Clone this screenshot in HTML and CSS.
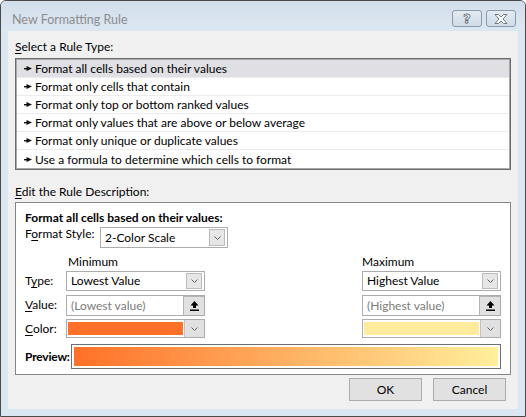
FILE: index.html
```html
<!DOCTYPE html>
<html lang="en">
<head>
    <meta charset="UTF-8">
    <title>New Formatting Rule</title>
    <link rel="stylesheet" href="styles.css">
</head>
<body>
    <div class="window">
        <div class="titlebar">
            <span class="title">New Formatting Rule</span>
            <div class="caption-buttons">
                <button class="cap-btn help">?</button>
                <button class="cap-btn close">
                    <svg width="14" height="10" viewBox="0 0 14 10">
                        <polygon points="1,0.5 4.5,0.5 7,3 9.5,0.5 13,0.5 9,5 13,9.5 9.5,9.5 7,7 4.5,9.5 1,9.5 5,5" fill="#fff" stroke="#6f7780" stroke-width="1" stroke-linejoin="round"/>
                    </svg>
                </button>
            </div>
        </div>

        <div class="client">
            <div class="label"><u>S</u>elect a Rule Type:</div>
            <ul class="rule-list">
                <li class="selected"><svg class="bullet" width="8" height="5" viewBox="0 0 8 5"><rect x="0" y="2" width="3" height="1.4"/><polygon points="2.5,0 8,2.6 2.5,5"/></svg>Format all cells based on their values</li>
                <li><svg class="bullet" width="8" height="5" viewBox="0 0 8 5"><rect x="0" y="2" width="3" height="1.4"/><polygon points="2.5,0 8,2.6 2.5,5"/></svg>Format only cells that contain</li>
                <li><svg class="bullet" width="8" height="5" viewBox="0 0 8 5"><rect x="0" y="2" width="3" height="1.4"/><polygon points="2.5,0 8,2.6 2.5,5"/></svg>Format only top or bottom ranked values</li>
                <li><svg class="bullet" width="8" height="5" viewBox="0 0 8 5"><rect x="0" y="2" width="3" height="1.4"/><polygon points="2.5,0 8,2.6 2.5,5"/></svg>Format only values that are above or below average</li>
                <li><svg class="bullet" width="8" height="5" viewBox="0 0 8 5"><rect x="0" y="2" width="3" height="1.4"/><polygon points="2.5,0 8,2.6 2.5,5"/></svg>Format only unique or duplicate values</li>
                <li><svg class="bullet" width="8" height="5" viewBox="0 0 8 5"><rect x="0" y="2" width="3" height="1.4"/><polygon points="2.5,0 8,2.6 2.5,5"/></svg>Use a formula to determine which cells to format</li>
            </ul>

            <div class="label section"><u>E</u>dit the Rule Description:</div>
            <div class="desc">
                <div class="desc-title">Format all cells based on their values:</div>
                <div class="style-row">
                    <span class="style-label">F<u>o</u>rmat Style:</span>
                    <div class="combo style-combo">
                        <span class="combo-text">2-Color Scale</span>
                        <span class="drop"><svg width="7" height="4" viewBox="0 0 7 4"><polyline points="0.5,0.5 3.5,3.5 6.5,0.5" fill="none" stroke="#606060"/></svg></span>
                    </div>
                </div>

                <div class="scale-grid">
                    <span></span>
                    <span class="col-head min-head">Minimum</span>
                    <span></span>
                    <span class="col-head">Maximum</span>

                    <span class="row-label">T<u>y</u>pe:</span>
                    <div class="combo type-combo">
                        <span class="combo-text">Lowest Value</span>
                        <span class="drop"><svg width="7" height="4" viewBox="0 0 7 4"><polyline points="0.5,0.5 3.5,3.5 6.5,0.5" fill="none" stroke="#606060"/></svg></span>
                    </div>
                    <span></span>
                    <div class="combo type-combo">
                        <span class="combo-text">Highest Value</span>
                        <span class="drop"><svg width="7" height="4" viewBox="0 0 7 4"><polyline points="0.5,0.5 3.5,3.5 6.5,0.5" fill="none" stroke="#606060"/></svg></span>
                    </div>

                    <span class="row-label"><u>V</u>alue:</span>
                    <div class="field">
                        <span class="placeholder">(Lowest value)</span>
                        <span class="ref-btn"><svg width="9" height="10" viewBox="0 0 9 10"><polygon points="4.5,0 8.5,4.5 6,4.5 6,7 3,7 3,4.5 0.5,4.5"/><rect x="0" y="8.5" width="9" height="1.5"/></svg></span>
                    </div>
                    <span></span>
                    <div class="field">
                        <span class="placeholder">(Highest value)</span>
                        <span class="ref-btn"><svg width="9" height="10" viewBox="0 0 9 10"><polygon points="4.5,0 8.5,4.5 6,4.5 6,7 3,7 3,4.5 0.5,4.5"/><rect x="0" y="8.5" width="9" height="1.5"/></svg></span>
                    </div>

                    <span class="row-label"><u>C</u>olor:</span>
                    <div class="color-combo">
                        <span class="swatch orange"></span>
                        <span class="color-drop"><svg width="7" height="4" viewBox="0 0 7 4"><polyline points="0.5,0.5 3.5,3.5 6.5,0.5" fill="none" stroke="#606060"/></svg></span>
                    </div>
                    <span></span>
                    <div class="color-combo">
                        <span class="swatch yellow"></span>
                        <span class="color-drop"><svg width="7" height="4" viewBox="0 0 7 4"><polyline points="0.5,0.5 3.5,3.5 6.5,0.5" fill="none" stroke="#606060"/></svg></span>
                    </div>
                </div>

                <div class="preview-row">
                    <span class="preview-label">Preview:</span>
                    <div class="preview"><div class="preview-fill"></div></div>
                </div>
            </div>

            <div class="actions">
                <button class="button">OK</button>
                <button class="button">Cancel</button>
            </div>
        </div>
    </div>
</body>
</html>
```

FILE: styles.css
```css
* {
    box-sizing: border-box;
}

body {
    margin: 0;
    font-family: Lato, "Noto Sans", sans-serif;
    font-size: 12px;
    color: #000;
    background: #fff;
}

u {
    text-decoration-thickness: 1px;
    text-underline-offset: 2px;
}

/* window frame */
.window {
    width: 526px;
    height: 417px;
    border: 1px solid #4a4a4a;
    border-radius: 6px 6px 0 0;
    background: #dbe6f3;
    display: flex;
    flex-direction: column;
}

.titlebar {
    height: 30px;
    flex-shrink: 0;
    display: flex;
    justify-content: space-between;
    align-items: flex-start;
    padding: 0 9px 0 11px;
    border-radius: 5px 5px 0 0;
    background: linear-gradient(#d2deea, #dde7f2);
}

.title {
    margin-top: 11px;
    line-height: 16px;
    font-size: 12.5px;
    color: #8d8d8d;
}

.caption-buttons {
    display: flex;
    gap: 4px;
    margin-top: 9px;
}

.cap-btn {
    width: 30px;
    height: 17px;
    padding: 0;
    border: 1px solid #8c9aab;
    border-radius: 3px;
    background: linear-gradient(#e3ebf3, #cfdbe8);
    display: flex;
    justify-content: center;
    align-items: center;
}

.help {
    font-family: "DejaVu Sans", sans-serif;
    font-weight: bold;
    font-size: 13px;
    line-height: 15px;
    color: #fff;
    -webkit-text-stroke: 0.9px #6f7780;
}

/* client area */
.client {
    flex: 1;
    margin: 0 7px 7px;
    padding: 8px 7px 8px;
    background: #f0f0f0;
    display: flex;
    flex-direction: column;
}

.label {
    line-height: 16px;
    margin-bottom: 3px;
}

.label.section {
    margin-top: 14px;
    margin-bottom: 2px;
}

.rule-list {
    list-style: none;
    margin: 0;
    padding: 1px;
    height: 112px;
    border: 1px solid #6c6c6c;
    box-shadow: inset 0 0 0 1px #a9a9a9;
    background: #fff;
}

.rule-list li {
    height: 18px;
    line-height: 17px;
    padding-left: 7px;
    border-bottom: 1px solid #ececec;
    display: flex;
    align-items: center;
}

.rule-list li:last-child {
    border-bottom: none;
}

.rule-list li.selected {
    background: #dfdfe4;
}

.bullet {
    margin-right: 3px;
    fill: #111;
}

/* rule description */
.desc {
    height: 173px;
    padding: 7px 9px 5px;
    border: 1px solid #858585;
    background: #fff;
}

.desc-title {
    font-weight: bold;
    line-height: 16px;
}

.style-row {
    display: flex;
    align-items: flex-start;
    margin-top: 1px;
}

.style-label {
    width: 75px;
    line-height: 16px;
    margin-top: -1px;
}

.combo {
    height: 21px;
    border: 1px solid #acacac;
    background: #fff;
    display: flex;
    align-items: center;
    justify-content: space-between;
    padding: 1px 2px 1px 4px;
}

.style-combo {
    width: 128px;
}

.type-combo {
    height: 20px;
}

.combo-text {
    line-height: 16px;
}

.drop {
    width: 16px;
    height: 100%;
    border: 1px solid #bcbcbc;
    background: #e6e6e6;
    display: flex;
    justify-content: center;
    align-items: center;
}

.scale-grid {
    display: grid;
    grid-template-columns: 41px 139px 1fr 139px;
    grid-template-rows: 17px 24px 24px 19px;
    align-items: start;
    margin-top: 6px;
}

.col-head {
    line-height: 16px;
}

.min-head {
    padding-left: 2px;
}

.row-label {
    line-height: 20px;
}

.field {
    height: 21px;
    border: 1px solid #acacac;
    background: #fff;
    display: flex;
    justify-content: space-between;
}

.placeholder {
    padding-left: 4px;
    line-height: 19px;
    color: #7b7b7b;
}

.ref-btn {
    width: 21px;
    border: 1px solid #b5b5b5;
    border-width: 1px 0 0 1px;
    background: #e1e1e1;
    display: flex;
    justify-content: center;
    align-items: center;
}

.color-combo {
    height: 19px;
    border: 1px solid #acacac;
    background: #fff;
    display: flex;
}

.swatch {
    flex: 1;
    margin: 2px 1px 2px 1px;
}

.swatch.orange {
    background: #ff7128;
}

.swatch.yellow {
    background: #ffeb9c;
}

.color-drop {
    width: 20px;
    background: #e1e1e1;
    border-left: 1px solid #c4c4c4;
    display: flex;
    justify-content: center;
    align-items: center;
}

.preview-row {
    display: flex;
    align-items: center;
    margin-top: 6px;
}

.preview-label {
    width: 46px;
    font-weight: bold;
    letter-spacing: -0.2px;
}

.preview {
    flex: 1;
    height: 25px;
    padding: 2px;
    border: 1px solid #6f6f6f;
    background: #fff;
}

.preview-fill {
    height: 100%;
    background: linear-gradient(to right, #ff7128, #ffef9c);
}

/* dialog buttons */
.actions {
    display: flex;
    justify-content: flex-end;
    gap: 11px;
    margin-top: 3px;
    padding-right: 5px;
}

.button {
    width: 73px;
    height: 23px;
    padding: 0;
    font-family: inherit;
    font-size: 12px;
    color: #000;
    border: 1px solid #adadad;
    background: #e1e1e1;
}
```
